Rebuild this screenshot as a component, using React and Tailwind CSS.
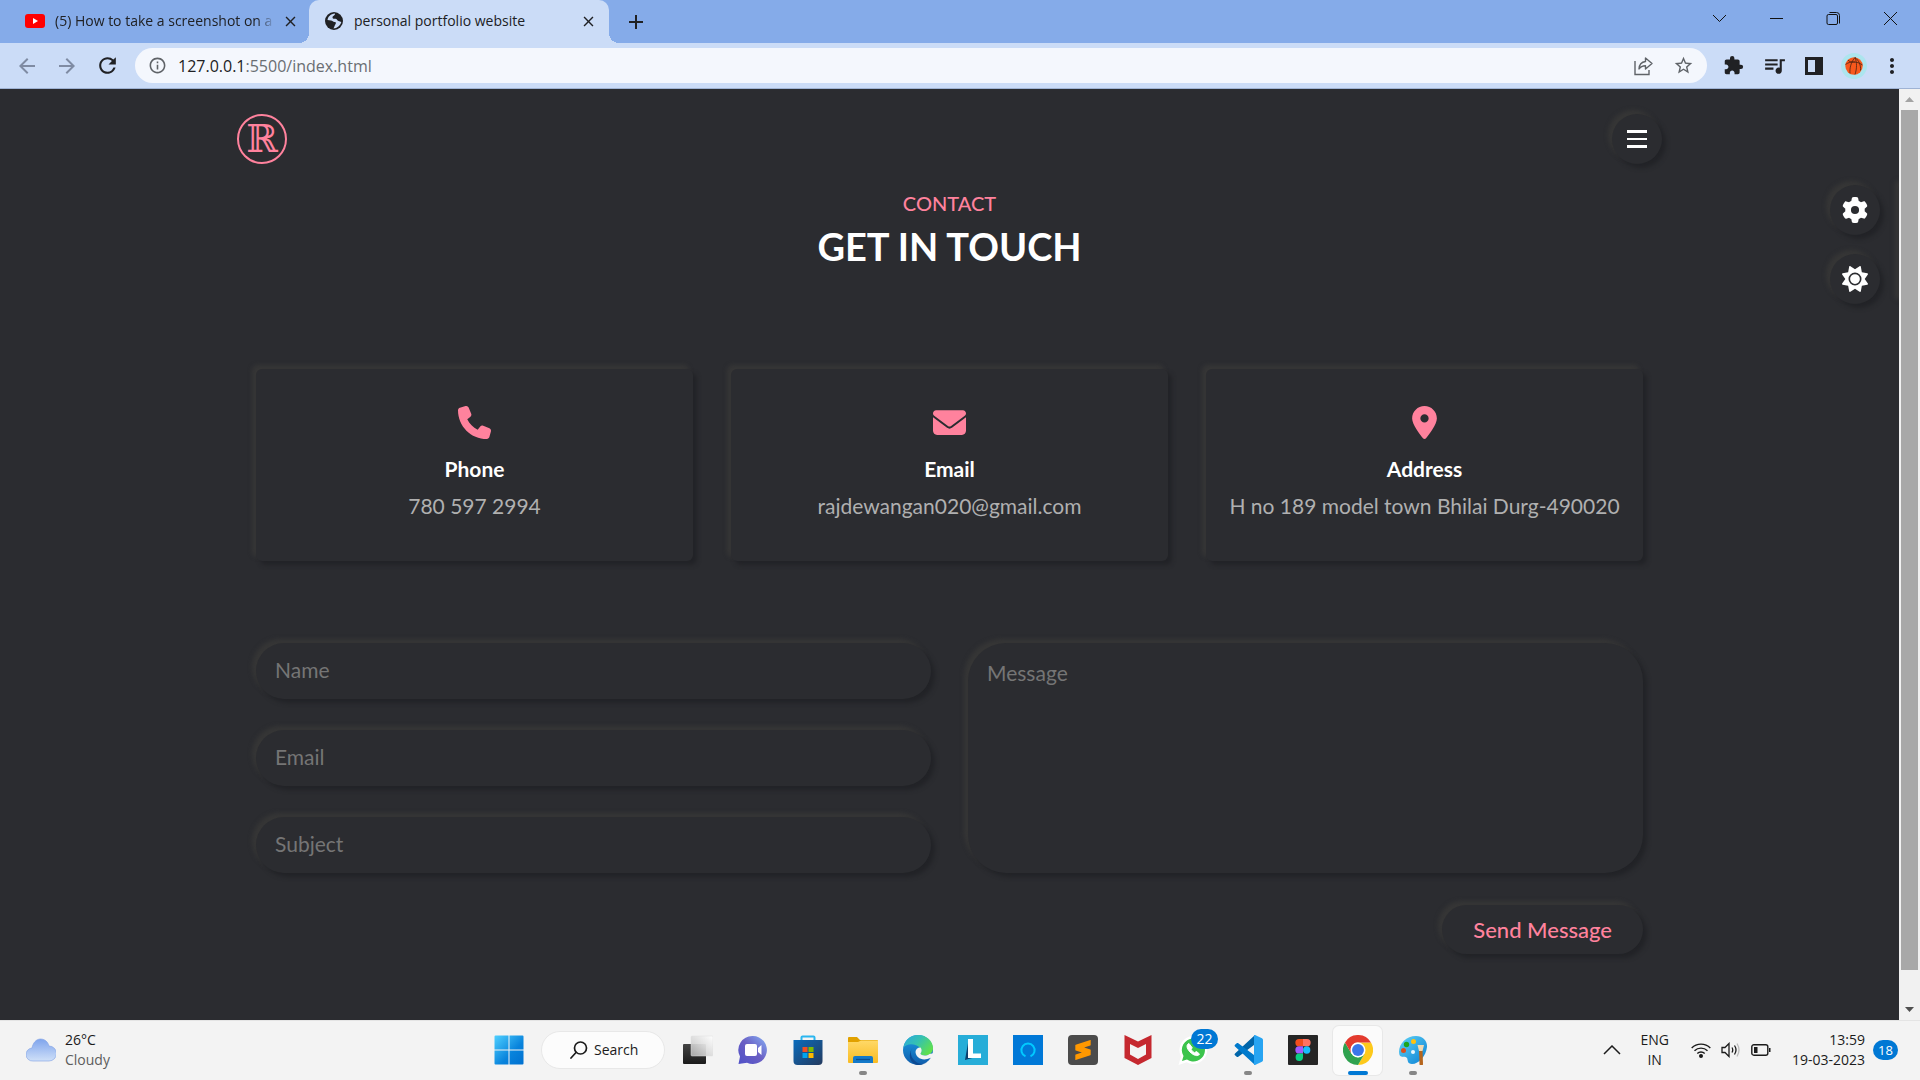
import React from "react";
import {
  MdExtension,
  MdQueueMusic,
  MdStarBorder,
  MdArrowBack,
  MdArrowForward,
  MdRefresh,
  MdInfoOutline,
  MdMoreVert,
  MdClose,
  MdAdd,
} from "react-icons/md";
import { FaPhone, FaEnvelope, FaLocationDot, FaGear, FaSun } from "react-icons/fa6";
import { SiSublimetext } from "react-icons/si";

const RAISED = "bg-[#2b2c30] shadow-[4px_4px_4px_#222327,-4px_-4px_4px_#363636]";

/* ---------- Browser ---------- */

function Globe() {
  return (
    <svg viewBox="0 0 20 20" className="size-5">
      <circle cx="10" cy="10" r="9" fill="#202124" />
      <path d="M11 2.500C6.500 3 4 5.500 3.500 9l3.500.5c1.500.3 2 1.500 3.500 1.500 2 0 1.500 2 .5 3l-1.500 3.500C13 17.500 16.500 14.500 17.300 11l-2.800-1c-1.500-.5-1.500-2-3-2.200-1.500-.2-3 .2-3-1.300 0-2 2.500-1.500 2.500-4z" fill="#cbdcf7" />
    </svg>
  );
}

function TabStrip() {
  return (
    <div className="flex h-[43px] items-stretch bg-[#85abe9] text-sm text-[#202124]">
      <div className="flex w-[309px] items-center pb-px pl-[25px] pr-[9px]">
        <svg viewBox="0 0 20 14" className="h-[14px] w-5 shrink-0">
          <rect width="20" height="14" rx="3" fill="#f00" />
          <path d="M8 4v6l5-3z" fill="#fff" />
        </svg>
        <span className="ml-[10px] w-[220px] overflow-hidden whitespace-nowrap [mask-image:linear-gradient(to_right,#000_92%,transparent)]">
          (5) How to take a screenshot on a
        </span>
        <button aria-label="Close tab" className="ml-auto flex size-5 items-center justify-center">
          <MdClose size={17} />
        </button>
      </div>
      <div className="relative flex w-[300px] items-center rounded-t-[10px] bg-[#cbdcf7] pb-px pl-[15px] pr-[11px]">
        <span className="absolute -left-[10px] bottom-0 size-[10px] bg-[radial-gradient(circle_at_0_0,transparent_10px,#cbdcf7_10px)]" />
        <span className="absolute -right-[10px] bottom-0 size-[10px] bg-[radial-gradient(circle_at_100%_0,transparent_10px,#cbdcf7_10px)]" />
        <Globe />
        <span className="ml-[10px]">personal portfolio website</span>
        <button aria-label="Close tab" className="ml-auto flex size-5 items-center justify-center">
          <MdClose size={17} />
        </button>
      </div>
      <button aria-label="New tab" className="ml-[15px] flex items-center">
        <MdAdd size={24} />
      </button>
      <div className="ml-auto flex items-start pr-px">
        {[
          ["Search tabs", "M2 5l6.5 6.5L15 5"],
          ["Minimize", "M2 8.5h13"],
          ["Restore", "M4.500 2.500h7a3 3 0 0 1 3 3v8M3.500 4.500h7.500q1.500 0 1.500 1.500v7q0 1.500-1.500 1.500h-7.500q-1.500 0-1.500-1.500v-7q0-1.500 1.500-1.500z"],
          ["Close window", "M2 2l13 13M15 2L2 15"],
        ].map(([label, d]) => (
          <button key={label} aria-label={label} className="flex h-[37px] w-[57px] items-center justify-center">
            <svg viewBox="0 0 17 17" className="size-[17px]" fill="none" stroke="#111" strokeWidth="1">
              <path d={d} />
            </svg>
          </button>
        ))}
      </div>
    </div>
  );
}

function Toolbar() {
  return (
    <div className="flex h-[46px] items-center border-b border-[#9fb3d4] bg-[#cbdcf7] pl-[15px] pr-4 text-[#202124]">
      <button aria-label="Back" className="mr-4 text-[#7f8ba3]"><MdArrowBack size={24} /></button>
      <button aria-label="Forward" className="mr-4 text-[#7f8ba3]"><MdArrowForward size={24} /></button>
      <button aria-label="Reload"><MdRefresh size={25} /></button>
      <div className="ml-[15px] flex h-[35px] flex-1 items-center rounded-full bg-[#f4f7fd] px-[13px]">
        <MdInfoOutline size={19} color="#5f6368" />
        <div aria-label="Address" className="ml-[11px] text-base text-[#6a6e73]">
          <span className="text-[#202124]">127.0.0.1</span>:5500/index.html
        </div>
        <button aria-label="Share" className="ml-auto mr-5">
          <svg viewBox="0 0 20 20" className="size-5" fill="none" stroke="#5f6368" strokeWidth="1.400">
            <path d="M2 5v13.500h14V14" />
            <path d="M12.500 2l6.500 5.500-6.500 5.500v-3.300c-3 0-5 .8-6.500 3.300.2-4 2.500-7 6.500-7.500z" strokeLinejoin="round" />
          </svg>
        </button>
        <button aria-label="Bookmark"><MdStarBorder size={21} color="#5f6368" /></button>
      </div>
      <div className="ml-4 flex items-center gap-[18px]">
        <button aria-label="Extensions"><MdExtension size={21} /></button>
        <button aria-label="Media"><MdQueueMusic size={25} /></button>
        <button aria-label="Side panel" className="flex h-[18px] w-[18px] justify-end border-[3px] border-[#202124]">
          <span className="h-full w-[5px] bg-[#202124]" />
        </button>
        <button aria-label="Profile" className="flex size-[26px] items-center justify-center rounded-full bg-[#ace5ee]">
          <svg viewBox="0 0 18 18" className="size-[18px]">
            <circle cx="9" cy="9" r="8.700" fill="#f8581c" />
            <g fill="none" stroke="#4a2313" strokeWidth=".8">
              <path d="M.5 7.500C5 4 12 4 17.500 8M10 .5C6 5 4.500 11 5 16.500M10 .5c2 5 2 11 0 17M10 .5c4 3 6 8 5.500 13M3 3c1 1.500 3.500 2.500 7 2" />
            </g>
          </svg>
        </button>
        <button aria-label="Menu" className="-ml-[5px]"><MdMoreVert size={24} /></button>
      </div>
    </div>
  );
}

function Scrollbar() {
  return (
    <div className="flex w-[21px] shrink-0 flex-col items-center bg-[#f1f1f1]">
      <div className="flex h-[21px] items-center">
        <svg viewBox="0 0 9 5" className="h-[5px] w-[9px]"><path d="M0 5l4.500-5L9 5z" fill="#a3a3a3" /></svg>
      </div>
      <div className="w-[17px] flex-1 bg-[#a8a8a8]" />
      <div className="flex h-[50px] items-end pb-2">
        <svg viewBox="0 0 9 5" className="h-[5px] w-[9px]"><path d="M0 0l4.500 5L9 0z" fill="#505050" /></svg>
      </div>
    </div>
  );
}

/* ---------- Portfolio page ---------- */

const CONTACTS = [
  { title: "Phone", text: "780 597 2994", Icon: FaPhone },
  { title: "Email", text: "rajdewangan020@gmail.com", Icon: FaEnvelope },
  { title: "Address", text: "H no 189 model town Bhilai Durg-490020", Icon: FaLocationDot },
];

function Logo() {
  return (
    <a
      href="#home"
      aria-label="Home"
      className="flex size-[50px] items-center justify-center rounded-full border-2 border-[#ff829d] font-['DejaVu_Serif',serif] text-[38px] leading-none text-[#ff829d]"
    >
      ℝ
    </a>
  );
}

function Field({ id, label, type }) {
  return (
    <input
      id={id}
      type={type}
      aria-label={label}
      placeholder={label}
      className={`${RAISED} block h-14 w-full rounded-full px-[19px] pb-[3px] text-[21px] text-white outline-none placeholder:text-[#757575]`}
    />
  );
}

function Portfolio() {
  return (
    <div className="relative min-w-0 flex-1 overflow-hidden bg-[#2b2c30] font-[Lato,sans-serif]">
      <header className="mx-auto flex max-w-[1425px] items-center justify-between pt-[25px]">
        <Logo />
        <button aria-label="Open menu" className={`${RAISED} flex size-[50px] flex-col items-center justify-center gap-[5px] rounded-full`}>
          <span className="h-[3px] w-5 bg-white" />
          <span className="h-[2px] w-5 bg-white" />
          <span className="h-[3px] w-5 bg-white" />
        </button>
      </header>

      <main className="mx-auto max-w-[1387px]">
        <div className="pt-[25px] text-center">
          <h2 className="text-xl leading-7 font-medium text-[#ff829d]">CONTACT</h2>
          <h1 className="mt-1 text-[38px] leading-[50px] font-bold text-white">GET IN TOUCH</h1>
        </div>

        <div className="mt-[98px] grid grid-cols-3 gap-[38px]">
          {CONTACTS.map(({ title, text, Icon }) => (
            <div key={title} className={`${RAISED} flex h-48 flex-col items-center rounded-md pt-[37px]`}>
              <Icon size={33} color="#ff829d" />
              <h3 className="mt-4 text-[21px] leading-7 font-bold text-white">{title}</h3>
              <p className="mt-[9px] text-[21px] leading-7 whitespace-nowrap text-[#b0b0b0]">{text}</p>
            </div>
          ))}
        </div>

        <form className="mt-[82px] grid grid-cols-2 gap-x-[37px]" onSubmit={(e) => e.preventDefault()}>
          <div className="flex flex-col justify-between">
            <Field id="name" label="Name" type="text" />
            <Field id="email" label="Email" type="email" />
            <Field id="subject" label="Subject" type="text" />
          </div>
          <textarea
            id="message"
            aria-label="Message"
            placeholder="Message"
            className={`${RAISED} block h-[230px] w-full resize-none rounded-[38px] px-[19px] py-[14px] text-[21px] leading-8 text-white outline-none placeholder:text-[#757575]`}
          />
          <button
            type="submit"
            className={`${RAISED} col-start-2 mt-8 h-[49px] justify-self-end rounded-full px-[31px] pb-px text-[22px] font-medium text-[#ff829d]`}
          >
            Send Message
          </button>
        </form>
      </main>

      <div className="absolute right-[19px] top-24 flex flex-col gap-[19px]">
        <button aria-label="Settings" className={`${RAISED} flex size-[50px] items-center justify-center rounded-full`}>
          <FaGear size={26} color="#fff" />
        </button>
        <button aria-label="Toggle theme" className={`${RAISED} flex size-[50px] items-center justify-center rounded-full`}>
          <FaSun size={26} color="#fff" />
        </button>
      </div>
      <aside className={`${RAISED} absolute left-full top-24 h-[118px] w-10`} />
    </div>
  );
}

/* ---------- Taskbar ---------- */

const svg = "size-[30px]";

function TaskView() {
  return (
    <svg viewBox="0 0 30 30" className={svg}>
      <defs>
        <linearGradient id="tvDark" x1="0" y1="0" x2="0" y2="1"><stop stopColor="#444" /><stop offset="1" stopColor="#1a1a1a" /></linearGradient>
        <linearGradient id="tvLight" x1="0" y1="1" x2="1" y2="0"><stop stopColor="#bbb" stopOpacity=".85" /><stop offset="1" stopColor="#fff" /></linearGradient>
      </defs>
      <rect x="0" y="9" width="23" height="20" rx="1" fill="url(#tvDark)" />
      <rect x="8" y="1" width="22" height="20" rx="1" fill="url(#tvLight)" stroke="#ddd" strokeWidth=".5" />
    </svg>
  );
}

function Chat() {
  return (
    <svg viewBox="0 0 30 30" className={svg}>
      <defs><linearGradient id="chat" x1="1" y1="0" x2="0" y2="1"><stop stopColor="#86b0f5" /><stop offset=".5" stopColor="#6a5fc4" /><stop offset="1" stopColor="#4f50c8" /></linearGradient></defs>
      <path d="M15 1a14 14 0 1 1-6 26.700L.5 29l1.500-7.500A14 14 0 0 1 15 1z" fill="url(#chat)" />
      <rect x="7" y="9" width="12" height="12" rx="2" fill="#fff" />
      <path d="M20 13l3.500-3v10L20 17z" fill="#fff" />
    </svg>
  );
}

function Store() {
  return (
    <svg viewBox="0 0 30 30" className={svg}>
      <defs><linearGradient id="store" x1="0" y1="0" x2="1" y2="1"><stop stopColor="#0a6cbd" /><stop offset="1" stopColor="#243a5e" /></linearGradient></defs>
      <path d="M8.500 6V2.500a1 1 0 0 1 1-1h11a1 1 0 0 1 1 1V6" fill="none" stroke="#29b6f0" strokeWidth="2" />
      <path d="M.5 5h29v21a4 4 0 0 1-4 4h-21a4 4 0 0 1-4-4z" fill="url(#store)" />
      <path d="M9.500 12h5v5h-5z" fill="#f25022" /><path d="M15.500 12h5v5h-5z" fill="#7fba00" />
      <path d="M9.500 18h5v5h-5z" fill="#00a4ef" /><path d="M15.500 18h5v5h-5z" fill="#ffb900" />
    </svg>
  );
}

function Explorer() {
  return (
    <svg viewBox="0 0 30 30" className={svg}>
      <defs><linearGradient id="folder" x1="0" y1="0" x2="0" y2="1"><stop stopColor="#ffd968" /><stop offset="1" stopColor="#f9bb22" /></linearGradient></defs>
      <path d="M0 3a1 1 0 0 1 1-1h8l3 3h17a1 1 0 0 1 1 1v3H0z" fill="#e1a100" />
      <path d="M0 7h10l3-1.500h17V27a1 1 0 0 1-1 1H1a1 1 0 0 1-1-1z" fill="url(#folder)" />
      <path d="M5 28v-5a2 2 0 0 1 2-2h16a2 2 0 0 1 2 2v5z" fill="#1479c9" />
      <path d="M8 24.500h14" stroke="#0a4f93" strokeWidth="1.300" />
    </svg>
  );
}

function Edge() {
  return (
    <svg viewBox="0 0 30 30" className={svg}>
      <defs>
        <linearGradient id="edgeTop" x1="0" y1="0" x2="1" y2=".6"><stop stopColor="#2aa7e0" /><stop offset=".5" stopColor="#35c1b1" /><stop offset="1" stopColor="#5fe04e" /></linearGradient>
        <linearGradient id="edgeLeft" x1="0" y1="0" x2="0" y2="1"><stop stopColor="#1b9de2" /><stop offset="1" stopColor="#0f5cab" /></linearGradient>
      </defs>
      <circle cx="15" cy="15" r="15" fill="url(#edgeLeft)" />
      <path d="M.5 13C1.500 5 7.500 0 15 0c9 0 15 6.500 15 13 0 5-4 7.500-8 7.500-3 0-5-1-4.500-2 1.500-2 1-4-.5-5.500C13 8 3 8 .5 13z" fill="url(#edgeTop)" />
      <path d="M12 11c-5 2-6 10 0 15 4 3.500 9 4 13 .5A15 15 0 0 1 15 30C9 29 6 24 7 19c.5-4 2.500-7 5-8z" fill="#0c4a92" />
      <path d="M12.500 17c.5 6 7 9.500 15 6 1.500-.5 2 .5 1 2l2 5V18l-4 1c-4 3-9 1-9-.5 1.500-2 1.500-4 0-6-3 0-5 2-5 4.500z" fill="#f3f3f3" />
    </svg>
  );
}

function LApp() {
  return (
    <svg viewBox="0 0 30 30" className={svg}>
      <path d="M0 0h30v30H0z" fill="#27add8" />
      <path d="M10 8l3 11 5 3-11 3z" fill="#0b3f6d" />
      <path d="M10 4h5v14.500h8V23H10z" fill="#fff" />
    </svg>
  );
}

function Alexa() {
  return (
    <svg viewBox="0 0 30 30" className={svg}>
      <path d="M0 0h30v30H0z" fill="#0078d7" />
      <path d="M12.500 21.300a6.600 6.600 0 1 1 5 0" fill="none" stroke="#00caff" strokeWidth="2" />
    </svg>
  );
}

function Sublime() {
  return (
    <span className="flex size-[30px] items-center justify-center rounded-sm bg-[#4b4b4b]">
      <SiSublimetext size={20} color="#ff9800" />
    </span>
  );
}

function McAfee() {
  return (
    <svg viewBox="0 0 30 30" className={svg}>
      <path d="M1.500 0L15 6.500 28.500 0v23L15 30 1.500 23z" fill="#c5282f" />
      <path d="M7 9l8 4 8-4v10.500L15 24l-8-4.500z" fill="#f3f3f3" />
    </svg>
  );
}

function WhatsApp() {
  return (
    <span className="relative block">
      <svg viewBox="0 0 30 30" className={svg}>
        <path d="M15 1a14 14 0 1 1-6.500 26.300L.5 30 3 21.500A14 14 0 0 1 15 1z" fill="#fff" />
        <path d="M15 3.500a11.500 11.500 0 1 1-6 21L4 26l1.500-5A11.500 11.500 0 0 1 15 3.500z" fill="#3cc44c" />
        <path d="M11 8.500c-3 1-2.500 5 1 8.500s8 5 9.500 2l-3-2.500-2 1.200c-1.500-.7-2.500-1.700-3.300-3.200l1-1.800z" fill="#fff" stroke="#fff" strokeLinejoin="round" />
      </svg>
      <span className="absolute -right-[10px] -top-[6px] rounded-full bg-[#0078d4] px-[5px] text-sm leading-5 text-white">22</span>
    </span>
  );
}

function VSCode() {
  return (
    <svg viewBox="0 0 30 30" className={svg}>
      <path d="M22 0L2 18.500a1.200 1.200 0 0 0 0 1.800l1.700 1.500c.5.400 1.100.400 1.600 0L23 8.500z" fill="#0065a9" />
      <path d="M22 30L2 11.500a1.200 1.200 0 0 1 0-1.800l1.700-1.500c.5-.4 1.100-.4 1.600 0L23 21.500z" fill="#007acc" />
      <path d="M22 0l7 3.200c.6.300 1 .9 1 1.500v20.600c0 .6-.4 1.200-1 1.500L22 30c-.7 0-1-.5-1-1V1c0-.5.300-1 1-1z" fill="#27a4f2" />
    </svg>
  );
}

function Figma() {
  return (
    <svg viewBox="0 0 30 30" className={svg}>
      <rect width="30" height="30" rx="1" fill="#252525" />
      <path d="M15 4h-4a3.600 3.600 0 0 0 0 7.300h4z" fill="#f24e1e" />
      <path d="M15 4h4a3.600 3.600 0 0 1 0 7.300h-4z" fill="#ff7262" />
      <path d="M15 11.300h-4a3.600 3.600 0 0 0 0 7.300h4z" fill="#a259ff" />
      <circle cx="18.700" cy="15" r="3.650" fill="#1abcfe" />
      <path d="M15 18.600h-4a3.700 3.700 0 1 0 4 3.700z" fill="#0acf83" />
    </svg>
  );
}

function Chrome() {
  return (
    <svg viewBox="0 0 48 48" className={svg}>
      <path d="M24 12h20.800A24 24 0 0 1 24 48l10.400-18z" fill="#fdc91c" />
      <path d="M24 48A24 24 0 0 1 3.200 12l10.400 18L24 36l10.400-6z" fill="#2fa24f" />
      <path d="M3.200 12A24 24 0 0 1 44.800 12H24a12 12 0 0 0-11.600 9l1.200 9z" fill="#e33b2e" />
      <circle cx="24" cy="24" r="12" fill="#fff" />
      <circle cx="24" cy="24" r="9.500" fill="#3a76ea" />
    </svg>
  );
}

function Paint() {
  return (
    <svg viewBox="0 0 30 30" className={svg}>
      <defs><linearGradient id="paint" x1="0" y1="0" x2="1" y2="1"><stop stopColor="#5fd3f5" /><stop offset="1" stopColor="#0a7fd4" /></linearGradient></defs>
      <path d="M18 1c7 0 11.500 5 11 11-1 9-8 17-15 17-5 0-4-4-5-6-1-2-6 0-7.500-3C-1 11 7 1 18 1z" fill="url(#paint)" />
      <circle cx="15.500" cy="6.500" r="2.500" fill="#ffc20e" />
      <circle cx="8.500" cy="9.500" r="2.700" fill="#1ea51e" />
      <circle cx="5.500" cy="15.500" r="2.500" fill="#dd4f1e" />
      <circle cx="15" cy="17" r="2" fill="#e8f7fd" />
      <path d="M21 15h3.500l.5 14a1 1 0 0 1-3.500 0z" fill="#b5651d" />
      <path d="M19.500 10h6.500l-1.500 6H21z" fill="#efd9b4" />
    </svg>
  );
}

const APPS = [
  { name: "Task view", Icon: TaskView },
  { name: "Chat", Icon: Chat },
  { name: "Microsoft Store", Icon: Store },
  { name: "File Explorer", Icon: Explorer, open: true },
  { name: "Edge", Icon: Edge },
  { name: "Lenovo", Icon: LApp },
  { name: "Alexa", Icon: Alexa },
  { name: "Sublime Text", Icon: Sublime },
  { name: "McAfee", Icon: McAfee },
  { name: "WhatsApp", Icon: WhatsApp },
  { name: "VS Code", Icon: VSCode, open: true },
  { name: "Figma", Icon: Figma },
  { name: "Chrome", Icon: Chrome, active: true },
  { name: "Paint", Icon: Paint, open: true },
];

function Taskbar() {
  return (
    <footer className="grid h-[60px] grid-cols-[1fr_auto_1fr] items-center border-t border-[#e4e4e4] bg-[#f3f3f3] pb-px text-sm text-[#1b1b1b]">
      <div className="flex items-center pl-[26px]">
        <svg viewBox="0 0 30 24" className="h-6 w-[30px]">
          <defs><linearGradient id="cloud" x1="0" y1="0" x2="0" y2="1"><stop stopColor="#7fa4ec" /><stop offset="1" stopColor="#cfe0f8" /></linearGradient></defs>
          <path d="M7 23a6.500 6.500 0 0 1-1-13C7 5 10 1 14.500 1S22 4 23 8a7.500 7.500 0 0 1 0 15z" fill="url(#cloud)" stroke="#7d9fe4" strokeWidth=".6" />
        </svg>
        <div className="ml-[9px] leading-5">
          <div>26°C</div>
          <div className="text-[#5d5d5d]">Cloudy</div>
        </div>
      </div>

      <div className="flex items-center pl-px">
        <button aria-label="Start" className="flex w-[55px] justify-center">
          <svg viewBox="0 0 30 30" className={svg}>
            <defs><linearGradient id="win" x1="0" y1="0" x2="1" y2="1"><stop stopColor="#4fd0ff" /><stop offset=".6" stopColor="#0883dc" /><stop offset="1" stopColor="#0070d0" /></linearGradient></defs>
            <path d="M.5 1.500a1 1 0 0 1 1-1h13v14H.5zM15.500.5h13a1 1 0 0 1 1 1v13h-14zM.5 15.500h14v14h-13a1 1 0 0 1-1-1zM15.500 15.500h14v13a1 1 0 0 1-1 1h-13z" fill="url(#win)" />
          </svg>
        </button>
        <button className="mx-[5px] flex h-[38px] w-[124px] items-center rounded-full border border-[#e8e8e8] bg-[#fcfcfc] pl-7">
          <svg viewBox="0 0 18 18" className="size-[18px]" fill="none" stroke="#1b1b1b" strokeWidth="1.700" strokeLinecap="round">
            <circle cx="10.500" cy="7" r="6" /><path d="M6 11.500L1 17" />
          </svg>
          <span className="ml-[6px]">Search</span>
        </button>
        {APPS.map(({ name, Icon, open, active }) => (
          <button
            key={name}
            aria-label={name}
            className={`relative mx-[3px] flex h-[49px] w-[49px] items-center justify-center rounded-md ${active ? "bg-[#fbfbfb] ring-1 ring-[#e8e8e8]" : ""}`}
          >
            <Icon />
            {open && <span className="absolute bottom-0 h-1 w-2 rounded-full bg-[#868686]" />}
            {active && <span className="absolute bottom-0 h-1 w-5 rounded-full bg-[#0078d4]" />}
          </button>
        ))}
      </div>

      <div className="flex items-center justify-end pr-[22px]">
        <svg viewBox="0 0 18 10" className="h-[10px] w-[18px]" fill="none" stroke="#1b1b1b" strokeWidth="1.500"><path d="M1 9l8-8 8 8" /></svg>
        <div className="ml-[19px] text-center leading-5">ENG<br />IN</div>
        <svg viewBox="0 0 20 16" className="ml-[22px] h-4 w-5" fill="none" stroke="#1b1b1b" strokeWidth="1.400">
          <path d="M.7 6a13 13 0 0 1 18.600 0M3.500 8.800a9.200 9.200 0 0 1 13 0M6.300 11.500a5.200 5.200 0 0 1 7.400 0" />
          <circle cx="10" cy="14" r="1.300" fill="#1b1b1b" />
        </svg>
        <svg viewBox="0 0 20 16" className="ml-[10px] h-4 w-5" fill="none" stroke="#1b1b1b" strokeWidth="1.300">
          <path d="M1 5.500h3l4-4v13l-4-4H1zM11 5.500q1.500 2.500 0 5M13.500 3.500q3 4.500 0 9" />
          <path d="M16 1.500q4 6.500 0 13" stroke="#bbb" />
        </svg>
        <svg viewBox="0 0 20 12" className="ml-[10px] h-3 w-5" fill="none" stroke="#1b1b1b" strokeWidth="1.400">
          <rect x=".8" y=".8" width="16" height="10.400" rx="2" /><path d="M3 3h3.500v6H3zM18 4h1.500v4H18z" fill="#1b1b1b" stroke="none" />
        </svg>
        <div className="ml-[21px] text-right leading-5">13:59<br />19-03-2023</div>
        <span className="ml-2 flex h-5 w-[25px] items-center justify-center rounded-full bg-[#0078d4] text-[13px] text-white">18</span>
      </div>
    </footer>
  );
}

export default function App() {
  return (
    <div className="flex h-screen flex-col overflow-hidden font-['Open_Sans','Noto_Sans',sans-serif]">
      <TabStrip />
      <Toolbar />
      <div className="flex min-h-0 flex-1">
        <Portfolio />
        <Scrollbar />
      </div>
      <Taskbar />
    </div>
  );
}
